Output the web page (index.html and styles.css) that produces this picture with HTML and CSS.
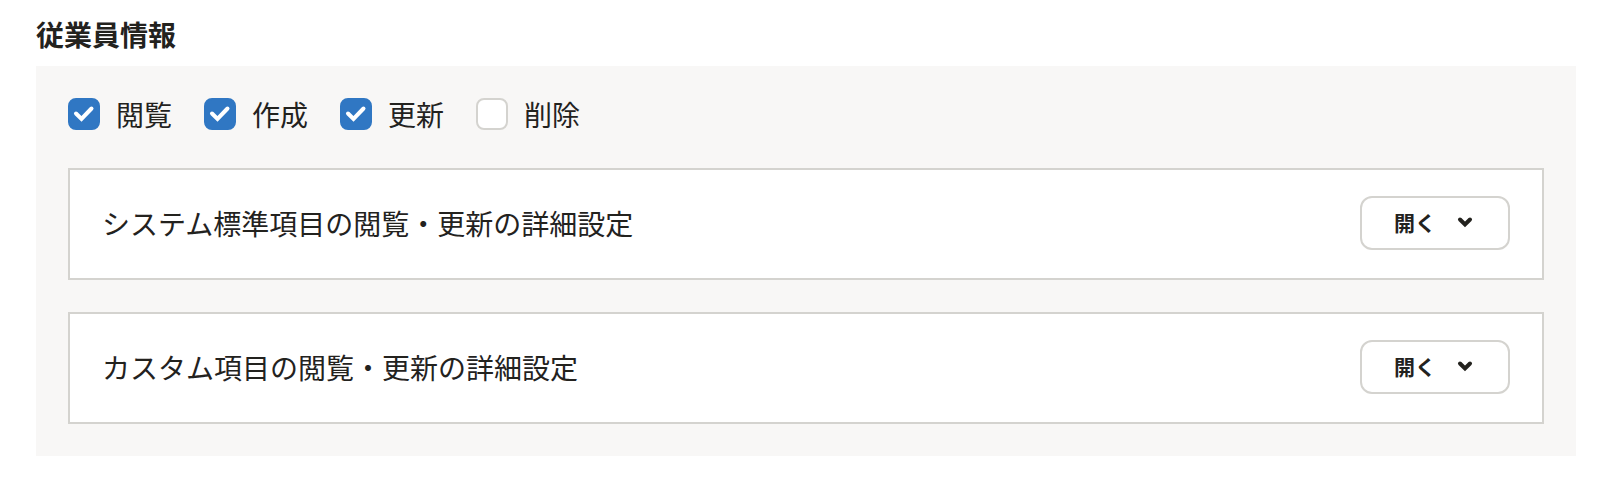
FILE: index.html
```html
<!DOCTYPE html>
<html lang="ja">
<head>
<meta charset="utf-8">
<meta name="viewport" content="width=device-width, initial-scale=1">
<title>従業員情報</title>
<link rel="stylesheet" href="styles.css">
</head>
<body>
<main class="section">
  <h2 class="section-title">従業員情報</h2>
  <div class="panel">
    <div class="permissions">
      <label class="permission"><input class="checkbox" type="checkbox" checked><svg class="check-mark" viewBox="0 0 32 32" aria-hidden="true"><path d="M8 15.500 13.500 21 23.500 10.500"/></svg><span>閲覧</span></label>
      <label class="permission"><input class="checkbox" type="checkbox" checked><svg class="check-mark" viewBox="0 0 32 32" aria-hidden="true"><path d="M8 15.500 13.500 21 23.500 10.500"/></svg><span>作成</span></label>
      <label class="permission"><input class="checkbox" type="checkbox" checked><svg class="check-mark" viewBox="0 0 32 32" aria-hidden="true"><path d="M8 15.500 13.500 21 23.500 10.500"/></svg><span>更新</span></label>
      <label class="permission"><input class="checkbox" type="checkbox"><svg class="check-mark" viewBox="0 0 32 32" aria-hidden="true"><path d="M8 15.500 13.500 21 23.500 10.500"/></svg><span>削除</span></label>
    </div>
    <section class="card">
      <h3 class="card-title">システム標準項目の閲覧・更新の詳細設定</h3>
      <button class="toggle" type="button">開く<svg class="chevron" viewBox="0 0 22 22" aria-hidden="true"><path d="M6 7.500 11 12.500 16 7.500"/></svg></button>
    </section>
    <section class="card">
      <h3 class="card-title">カスタム項目の閲覧・更新の詳細設定</h3>
      <button class="toggle" type="button">開く<svg class="chevron" viewBox="0 0 22 22" aria-hidden="true"><path d="M6 7.500 11 12.500 16 7.500"/></svg></button>
    </section>
  </div>
</main>
</body>
</html>
```
FILE: styles.css
```css
* {
  box-sizing: border-box;
}

body {
  margin: 0;
  background: #fff;
  color: #23221e;
  font-family: "Noto Sans CJK JP", sans-serif;
  font-size: 28px;
  line-height: 32px;
}

.section {
  padding: 18px 40px 30px 36px;
}

.section-title {
  margin: 0 0 16px;
  font-size: 28px;
  font-weight: 700;
}

.panel {
  display: flex;
  flex-direction: column;
  gap: 32px;
  padding: 32px;
  background: #f8f7f6;
}

.permissions {
  display: flex;
  flex-wrap: wrap;
  gap: 0 32px;
  padding-bottom: 6px;
}

.permission {
  display: grid;
  grid-template-columns: 32px auto;
  align-items: center;
  column-gap: 16px;
  cursor: pointer;
}

.checkbox {
  grid-area: 1 / 1;
  appearance: none;
  width: 32px;
  height: 32px;
  margin: 0;
  border: 2px solid #d4d3cf;
  border-radius: 8px;
  background: #fff;
}

.checkbox:checked {
  border-color: #3077c3;
  background: #3077c3;
}

.check-mark {
  grid-area: 1 / 1;
  width: 32px;
  height: 32px;
  fill: none;
  stroke: #fff;
  stroke-width: 4;
  stroke-linecap: round;
  visibility: hidden;
  pointer-events: none;
}

.checkbox:checked + .check-mark {
  visibility: visible;
}

.card {
  display: flex;
  align-items: center;
  justify-content: space-between;
  gap: 32px;
  padding: 26px 32px 28px;
  border: 2px solid #d4d3cf;
  background: #fff;
}

.card-title {
  margin: 0;
  font-size: 28px;
  font-weight: 400;
}

.toggle {
  display: flex;
  flex-shrink: 0;
  align-items: flex-start;
  gap: 18px;
  padding: 14px 32px;
  border: 2px solid #d4d3cf;
  border-radius: 12px;
  background: #fff;
  color: inherit;
  font: inherit;
  font-size: 21px;
  font-weight: 700;
  line-height: 20px;
  cursor: pointer;
}

.chevron {
  width: 22px;
  height: 22px;
  fill: none;
  stroke: currentColor;
  stroke-width: 4;
  stroke-linecap: round;
}
```
